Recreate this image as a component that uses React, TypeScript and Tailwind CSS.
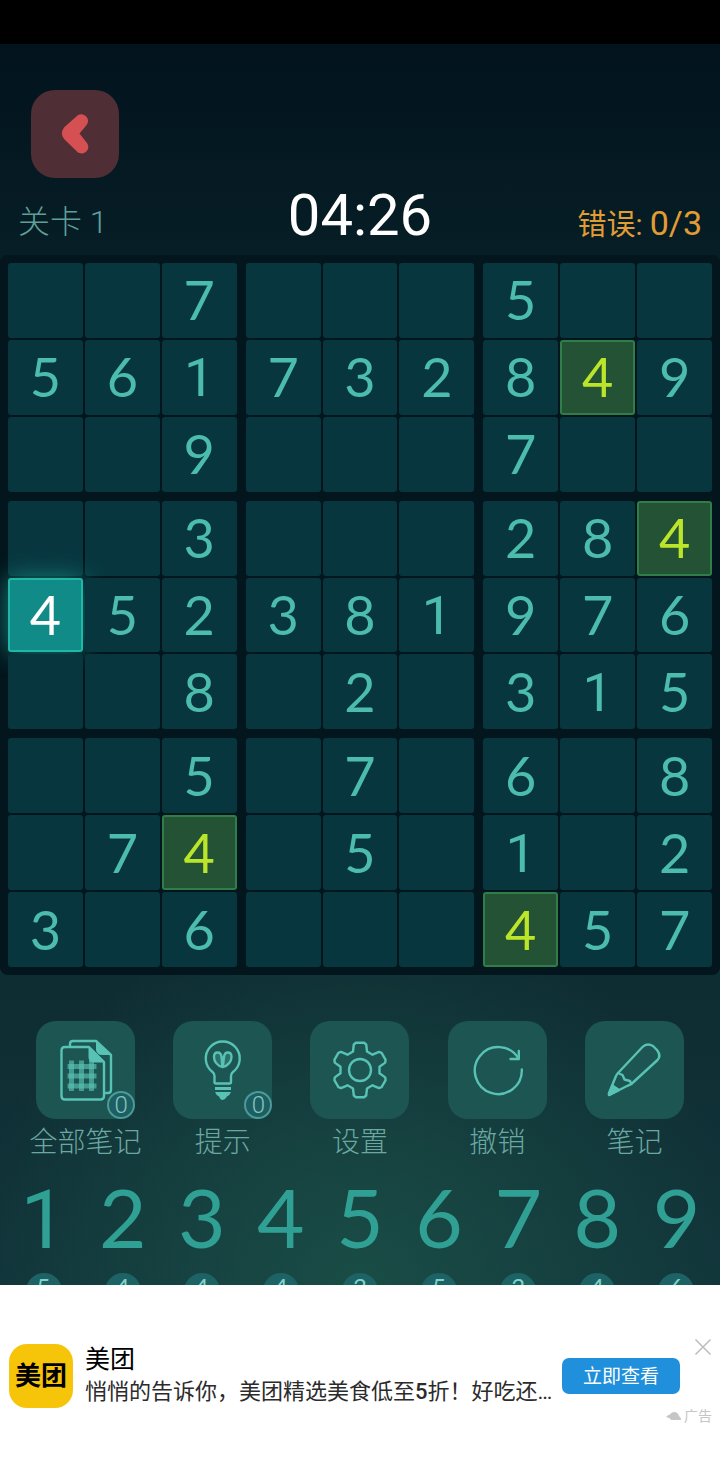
import type { ReactNode } from 'react'
import clsx from 'clsx'

const rows = [
  '007000500',
  '561732849',
  '009000700',
  '003000284',
  '452381976',
  '008020315',
  '005070608',
  '074050102',
  '306000457',
]

const selected = { row: 4, col: 0 }
const remaining = [5, 4, 4, 4, 3, 5, 3, 4, 6]
const three = [0, 1, 2]

// Lato's 1 has a foot, the game's does not
function Digit({ value }: { value: string }) {
  return (
    <span>
      {value === '1' ? <span className="font-[Roboto,sans-serif] leading-none">{value}</span> : value}
    </span>
  )
}

function Cell({ row, col }: { row: number; col: number }) {
  const value = rows[row][col]
  const isSelected = row === selected.row && col === selected.col
  const isSame = !isSelected && value === rows[selected.row][selected.col]

  return (
    <button
      type="button"
      aria-label={`R${row + 1} C${col + 1}`}
      className={clsx(
        'flex min-w-0 items-center justify-center rounded-[3px] font-[Lato,sans-serif] text-[54px] leading-none',
        isSelected && 'border-2 border-[#1fb8a6] bg-[#118b87] text-white shadow-[0_0_24px_#14847d]',
        isSame && 'border-2 border-[#2f7d48] bg-[#235234] text-[#bbe52b]',
        !isSelected && !isSame && 'bg-[#08363f] text-[#4cbcad]'
      )}
    >
      {value !== '0' && <Digit value={value} />}
    </button>
  )
}

function Board() {
  return (
    <div className="grid grid-cols-3 gap-[9px] rounded-lg bg-[#03151d] p-2">
      {rows.map((_, box) => (
        <div key={box} className="grid aspect-square grid-cols-3 grid-rows-3 gap-[2px]">
          {three.map((r) =>
            three.map((c) => (
              <Cell key={`${r}-${c}`} row={Math.floor(box / 3) * 3 + r} col={(box % 3) * 3 + c} />
            ))
          )}
        </div>
      ))}
    </div>
  )
}

function Icon({ children }: { children: ReactNode }) {
  return (
    <svg
      viewBox="0 0 99 98"
      className="h-full w-full"
      fill="none"
      stroke="#58c2b4"
      strokeWidth="2.4"
      strokeLinecap="round"
      strokeLinejoin="round"
      aria-hidden="true"
    >
      {children}
    </svg>
  )
}

function NotesIcon() {
  return (
    <Icon>
      <path d="M34 25V23Q34 20 37 20H60L75 34V69Q75 72 72 72H69" />
      <path d="M60 20L75 34H66Q61 34 60 29Z" fill="#58c2b4" stroke="none" />
      <path d="M53 26H29Q25.500 26 25.500 29.500V75Q25.500 78.500 29 78.500H64.500Q68 78.500 68 75V41Z" />
      <path d="M53 26V37Q53 41 57 41H68Z" fill="#58c2b4" strokeWidth="1" />
      <g strokeWidth="5" strokeLinecap="butt" strokeOpacity="0.65">
        <path d="M35.500 39.500V70M45.500 39.500V70M55.500 39.500V70" />
        <path d="M31.500 45.500H60.500M31.500 55H60.500M31.500 65H60.500" />
      </g>
    </Icon>
  )
}

function BulbIcon() {
  return (
    <Icon>
      <path d="M41.500 61Q41.500 62.500 43 62.500H56.500Q58 62.500 58 61V55Q58 52.500 60 51A17 17 0 1 0 39.500 51Q41.500 52.500 41.500 55Z" />
      <path
        d="M49.700 46C44 45 41 40 41 36C41 30 48 30 48.500 36C49 40 49 43 49.700 46C50.400 43 50.400 40 51 36C51.500 30 58.500 30 58.500 36C58.500 40 55 45 49.700 46Z"
        fill="#58c2b4"
        fillOpacity="0.25"
      />
      <path d="M42 67.500H58" strokeWidth="3" strokeLinecap="butt" />
      <path d="M42 71H58Q57 74 54 75.500Q52 79 49.700 79Q47.500 79 46 75.500Q43 74 42 71Z" fill="#58c2b4" stroke="none" />
    </Icon>
  )
}

const tooth = [[-7, -18.5], [-6.2, -25.5], [-4, -27.3], [4, -27.3], [6.2, -25.5], [7, -18.5]]

const gearPoints = [0, 60, 120, 180, 240, 300]
  .flatMap((deg) => {
    const a = (deg * Math.PI) / 180
    return tooth.map(
      ([x, y]) =>
        `${(50 + x * Math.cos(a) - y * Math.sin(a)).toFixed(1)},${(49 + x * Math.sin(a) + y * Math.cos(a)).toFixed(1)}`
    )
  })
  .join(' ')

function GearIcon() {
  return (
    <Icon>
      <polygon points={gearPoints} />
      <circle cx="50" cy="49" r="11" />
    </Icon>
  )
}

function UndoIcon() {
  return (
    <Icon>
      <path d="M73.800 48.500A23.500 23.500 0 1 1 70.500 37.500" />
      <path d="M70.800 30V38H62.500" />
    </Icon>
  )
}

function PencilIcon() {
  return (
    <Icon>
      <path d="M33.500 51.500L57.500 26Q62 21.500 68 25L72 29Q76.500 35 72.500 39L48 61.500Q45 64 41 65.500L24.500 74Q23.500 74 24 72L31 55Q32 53 33.500 51.500Z" />
      <path d="M33 52L37.500 54L39.500 58.500L45 60L46.500 63" />
      <path d="M24 74L28 65L34 69Z" fill="#58c2b4" />
    </Icon>
  )
}

function Tool({ label, icon, count }: { label: string; icon: ReactNode; count?: number }) {
  return (
    <button type="button" className="flex flex-col items-center text-[#6ba8a2]">
      <span className="relative h-[98px] w-[99px] rounded-[20px] bg-[#1d5552]">
        {icon}
        {count !== undefined && (
          <span className="absolute right-0 bottom-0 flex h-7 w-7 items-center justify-center rounded-full border-2 border-[#4b9b98] bg-[#1d5e62] font-[Roboto,sans-serif] text-2xl leading-none font-light text-[#83c5bf]">
            {count}
          </span>
        )}
      </span>
      <span className="text-[28px] leading-[48px] font-light">{label}</span>
    </button>
  )
}

function NumberPad() {
  return (
    <div className="grid grid-cols-9 px-1">
      {remaining.map((left, i) => (
        <button key={i} type="button" className="flex flex-col items-center font-[Lato,sans-serif] text-[#30a094]">
          <span className="text-[82px] leading-[98px]">
            <Digit value={String(i + 1)} />
          </span>
          <span className="mt-2 h-9 w-9 rounded-full bg-[#1d6264] text-2xl leading-7 text-[#7ed4cb]">{left}</span>
        </button>
      ))}
    </div>
  )
}

function AdBanner() {
  return (
    <aside className="flex h-[184px] shrink-0 items-center bg-white pr-2 pb-[2px] pl-[9px]">
      <div className="flex h-16 w-16 shrink-0 items-center justify-center rounded-[18px] bg-[#f6c50a] text-[26px] leading-none font-bold text-black">
        美团
      </div>
      <div className="ml-3 min-w-0 flex-1">
        <h2 className="text-[25px] leading-8 text-black">美团</h2>
        <p className="truncate text-[22px] leading-8 text-[#2b2b2b]">
          悄悄的告诉你，美团精选美食低至<span className="font-medium">5</span>折！好吃还不贵
        </p>
      </div>
      <a
        href="#"
        className="ml-2 flex h-9 w-[118px] shrink-0 items-center justify-center rounded-[7px] bg-[#2090dc] text-[19px] leading-none text-white"
      >
        立即查看
      </a>
      <div className="mt-3 -ml-3.5 flex h-[88px] shrink-0 flex-col items-end justify-between">
        <button type="button" aria-label="关闭">
          <svg viewBox="0 0 18 18" className="h-[18px] w-[18px]" stroke="#bdbdbd" strokeWidth="1.5" aria-hidden="true">
            <path d="M1.500 1.500L16.500 16.500M16.500 1.500L1.500 16.500" />
          </svg>
        </button>
        <span className="flex items-center gap-0.5 text-sm leading-5 text-[#c6c6c6]">
          <svg viewBox="0 0 16 12" className="h-3 w-4" fill="#c6c6c6" aria-hidden="true">
            <path d="M0 7Q2 4.500 4 4.500Q5 2 8 2Q12 2 13 6Q15.500 8 15 10H5Q4 8 3 8Z" />
          </svg>
          广告
        </span>
      </div>
    </aside>
  )
}

export default function App() {
  return (
    <div className="flex h-screen flex-col bg-black font-[Roboto,'Noto_Sans_CJK_SC',sans-serif]">
      <div className="h-11 shrink-0 bg-black" />
      <main className="min-h-0 flex-1 overflow-hidden bg-[radial-gradient(ellipse_55%_30%_at_50%_100%,#1a4d46,transparent),linear-gradient(#02131c,#071e27_17%,#0d2a30_65%,#11343a)]">
        <header className="pt-[46px]">
          <button
            type="button"
            aria-label="返回"
            className="ml-[31px] flex h-22 w-22 items-center justify-center rounded-3xl bg-[#502e35]"
          >
            <svg viewBox="0 0 88 88" className="h-full w-full" fill="#d55052" aria-hidden="true">
              <path d="M46.500 25.500C52 21.500 60 28 56 34.500L48.500 43.500L56 53C60.500 59.500 52.500 66.500 46.500 62L33.500 49.500Q28 43.500 33.500 37Z" />
            </svg>
          </button>
          <div className="grid h-[77px] grid-cols-3 items-baseline px-[18px] pt-1 leading-[66px]">
            <p className="self-start text-[32px] leading-[80px] font-light text-[#5f9f99]">关卡 1</p>
            <p className="text-center text-[58px] text-white">04:26</p>
            <p className="text-right text-[29px] text-[#e29c34]">
              错误: <span className="text-[34px]">0/3</span>
            </p>
          </div>
        </header>
        <Board />
        <div className="grid grid-cols-5 px-[17px] pt-[46px]">
          <Tool label="全部笔记" icon={<NotesIcon />} count={0} />
          <Tool label="提示" icon={<BulbIcon />} count={0} />
          <Tool label="设置" icon={<GearIcon />} />
          <Tool label="撤销" icon={<UndoIcon />} />
          <Tool label="笔记" icon={<PencilIcon />} />
        </div>
        <NumberPad />
      </main>
      <AdBanner />
    </div>
  )
}
